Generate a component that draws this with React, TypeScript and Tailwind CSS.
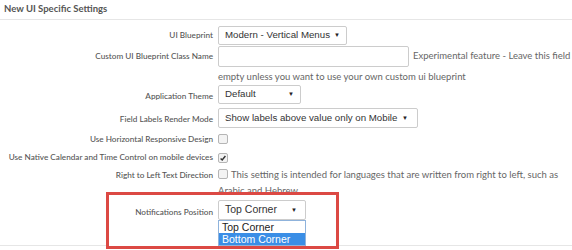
import React from 'react';

const label = 'w-[218px] shrink-0 whitespace-nowrap pr-[5px] text-right text-[8.2px] font-medium text-[#555]';
const help = 'text-[9.5px] text-[#666]';
const sel =
  'flex items-center justify-between whitespace-nowrap rounded-[2px] border border-[#ccc] bg-white pl-[6px] pr-[6px] text-[9.7px] text-[#333] font-["Liberation_Sans",Arial,sans-serif]';

function Caret() {
  return <span className="text-[6px] text-[#222]">▼</span>;
}

function Check({ checked }: { checked?: boolean }) {
  return (
    <span className="flex h-[10px] w-[10px] items-center justify-center rounded-[2px] border border-[#b5b5b5] bg-[#f3f3f3]">
      {checked ? (
        <svg viewBox="0 0 10 10" className="h-[8px] w-[8px]">
          <path d="M2 5.5 L4 7.5 L8 2.5" fill="none" stroke="#333" strokeWidth="1.8" />
        </svg>
      ) : null}
    </span>
  );
}

export default function App() {
  return (
    <div className='relative h-[250px] w-[572px] overflow-hidden bg-white font-["Lato","Open_Sans",sans-serif]'>
      <div className="flex h-[20px] items-center border-b border-[#e6e6e6] pl-[4px] text-[9.5px] font-bold text-[#555]">
        New UI Specific Settings
      </div>

      <div className="flex h-[26px] items-center pt-[4px]">
        <span className={label}>UI Blueprint</span>
        <div className={`${sel} h-[19px] w-[129px]`}>
          Modern - Vertical Menus <Caret />
        </div>
      </div>

      <div className="flex h-[21px] items-center">
        <span className={label}>Custom UI Blueprint Class Name</span>
        <div className="h-[21px] w-[191px] rounded-[2px] border border-[#ccc] bg-white" />
        <span className={`${help} ml-[4px] whitespace-nowrap`}>Experimental feature - Leave this field</span>
      </div>

      <div className={`${help} flex h-[18px] items-center pl-[218px] pt-[2px]`}>
        empty unless you want to use your own custom ui blueprint
      </div>

      <div className="flex h-[23px] items-start">
        <span className={`${label} pt-[5px]`}>Application Theme</span>
        <div className={`${sel} h-[19px] w-[83px]`}>
          Default <Caret />
        </div>
      </div>

      <div className="flex h-[22px] items-start">
        <span className={`${label} pt-[5px]`}>Field Labels Render Mode</span>
        <div className={`${sel} h-[20px] w-[200px] pr-[9px]`}>
          Show labels above value only on Mobile <Caret />
        </div>
      </div>

      <div className="flex h-[18px] items-center">
        <span className={label}>Use Horizontal Responsive Design</span>
        <Check />
      </div>

      <div className="flex h-[19px] items-center">
        <span className={label}>Use Native Calendar and Time Control on mobile devices</span>
        <Check checked />
      </div>

      <div className="flex items-start">
        <span className={`${label} pt-[2px]`}>Right to Left Text Direction</span>
        <div className={`${help} w-[350px] leading-[16px] text-[#555]`}>
          <span className="mr-[3px] inline-block align-[-1px]">
            <Check />
          </span>
          This setting is intended for languages that are written from right to left, such as Arabic and Hebrew
        </div>
      </div>

      <div className="absolute left-0 right-0 top-[245px] border-t border-[#e6e6e6]" />

      <div className="absolute left-[106px] top-[192px] h-[57px] w-[233px] border-[3px] border-[#dc4944] bg-white">
        <div className="flex items-start pt-[5px]">
          <span className="w-[109px] shrink-0 whitespace-nowrap pr-[5px] pt-[6px] text-right text-[8.2px] font-medium text-[#555]">
            Notifications Position
          </span>
          <div className="w-[88px]">
            <div className={`${sel} h-[20px] border-[#8fb3dc] pr-[8px] text-[10.5px]`}>
              Top Corner <Caret />
            </div>
            <div className='border border-[#8fb3dc] bg-white text-[10.5px] leading-[12px] text-[#222] font-["Liberation_Sans",Arial,sans-serif]'>
              <div className="pl-[3px]">Top Corner</div>
              <div className="bg-[#3a8ee6] pl-[3px] text-white">Bottom Corner</div>
            </div>
          </div>
        </div>
      </div>
    </div>
  );
}
